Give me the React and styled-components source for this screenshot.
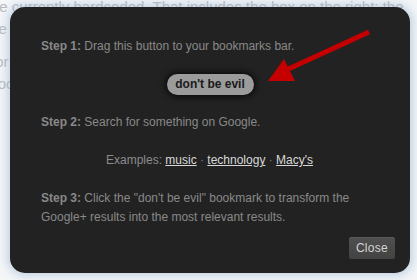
import React from "react";
import styled, { createGlobalStyle } from "styled-components";

const Global = createGlobalStyle`
  html, body { margin: 0; padding: 0; background: #fff; }
  body { width: 417px; height: 280px; overflow: hidden; font-family: "Liberation Sans", Arial, sans-serif; }
`;

const Page = styled.div`
  position: relative;
  width: 417px;
  height: 280px;
  overflow: hidden;
  background: #f4f6f8;
`;

const BackText = styled.div`
  margin-left: -14px;
  color: #b9bcc0;
  font-size: 15px;
  line-height: 22px;
  white-space: nowrap;
  margin-top: -4px;
`;

const BackPara = styled.p`
  margin: 0 0 11px;
  b { color: #a9acb0; }
`;

const Modal = styled.div`
  position: absolute;
  left: 10px;
  top: 7px;
  width: 400px;
  height: 266px;
  box-sizing: border-box;
  background: #222;
  border-radius: 15px;
  box-shadow: 0 0 9px 3px rgba(150, 175, 205, 0.5);
  padding: 30px 31px 14px 31px;
  display: flex;
  flex-direction: column;
  color: #898989;
  font-size: 12px;
  line-height: 19px;
`;

const Step = styled.p`
  margin: 0;
  white-space: nowrap;
  b { font-weight: bold; }
`;

const Center = styled.div`
  display: flex;
  justify-content: center;
  margin: ${(p) => p.$m};
`;

const Bookmarklet = styled.a`
  display: inline-block;
  width: 87px;
  height: 21px;
  line-height: 21px;
  text-align: center;
  border-radius: 11px;
  background: #9b9b9b;
  color: #1a1a1a;
  font-weight: bold;
  font-size: 12px;
  text-decoration: none;
  box-shadow: 0 0 6px 2px rgba(0, 0, 0, 0.7);
`;

const Examples = styled.div`
  text-align: center;
  color: #8c8c8c;
  margin: 19px 0 19px;
  padding-right: 1px;
`;

const ExLink = styled.a`
  color: #d8d8d8;
  text-decoration: underline;
`;

const Sep = styled.span`
  color: #777;
`;

const Footer = styled.div`
  display: flex;
  justify-content: flex-end;
  margin-top: auto;
  margin-right: -16px;
`;

const CloseBtn = styled.button`
  width: 46px;
  height: 22px;
  padding: 0;
  border: none;
  border-radius: 2px;
  background: linear-gradient(#4f4f4f, #434343);
  color: #d4d4d4;
  font-family: "Liberation Sans", Arial, sans-serif;
  font-size: 12px;
  letter-spacing: 0.3px;
  box-shadow: inset 0 1px 0 rgba(255,255,255,0.06);
`;

const Arrow = styled.svg`
  position: absolute;
  left: 266px;
  top: 28px;
  pointer-events: none;
`;

export default function App() {
  return (
    <Page>
      <Global />
      <BackText>
        <BackPara>
          are currently hardcoded. That includes the box on the right; the
          <br />
          the demo ones they were supposed to be. This is a mock. Ti
        </BackPara>
        <BackPara>
          For example, search for <b>music</b> and you will see a
          <br />
          Google+ results at the top, and it looks like a
        </BackPara>
      </BackText>
      <Modal>
        <Step>
          <b>Step 1:</b> Drag this button to your bookmarks bar.
        </Step>
        <Center $m="18px 0 18px">
          <Bookmarklet href="#">don't be evil</Bookmarklet>
        </Center>
        <Step>
          <b>Step 2:</b> Search for something on Google.
        </Step>
        <Examples>
          Examples: <ExLink href="#">music</ExLink> <Sep>·</Sep>{" "}
          <ExLink href="#">technology</ExLink> <Sep>·</Sep>{" "}
          <ExLink href="#">Macy's</ExLink>
        </Examples>
        <Step>
          <b>Step 3:</b> Click the "don't be evil" bookmark to transform the
          <br />
          Google+ results into the most relevant results.
        </Step>
        <Footer>
          <CloseBtn>Close</CloseBtn>
        </Footer>
      </Modal>
      <Arrow width="108" height="56" viewBox="266 28 108 56">
        <line x1="369" y1="32" x2="284" y2="71" stroke="#c40000" strokeWidth="5" strokeLinecap="butt" />
        <polygon points="268,81 284,59 295,81" fill="#c40000" />
      </Arrow>
    </Page>
  );
}
